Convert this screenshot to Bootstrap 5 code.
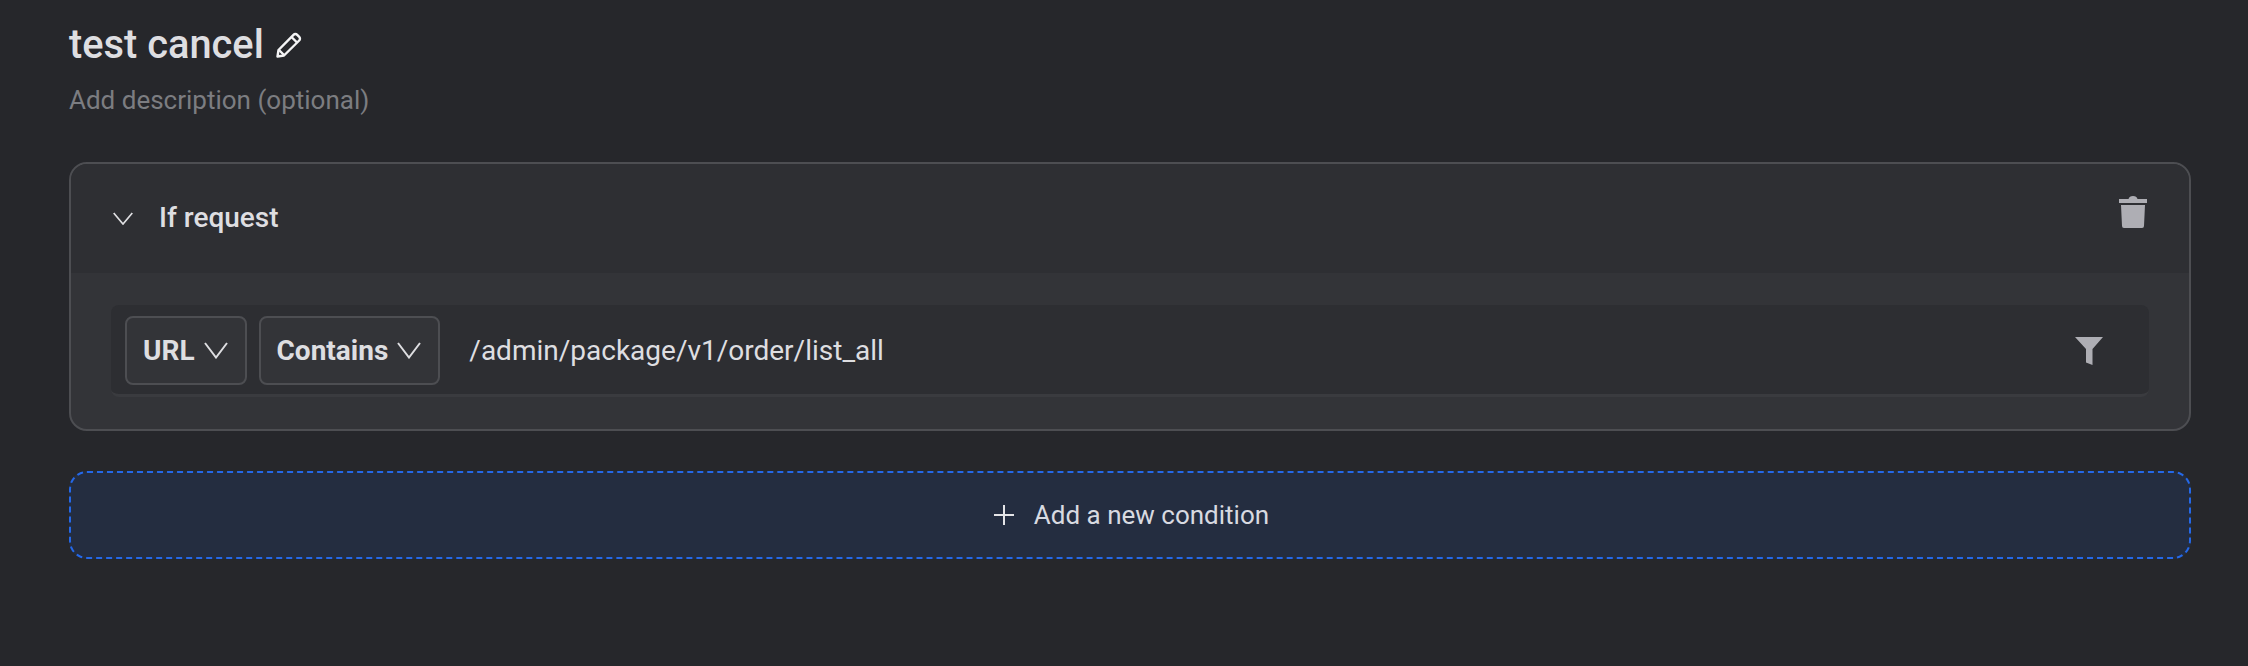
<!DOCTYPE html>
<html lang="en">
<head>
    <meta charset="UTF-8">
    <meta name="viewport" content="width=device-width, initial-scale=1.0">
    <title>test cancel</title>
    <link href="https://cdn.jsdelivr.net/npm/bootstrap@5.3.0/dist/css/bootstrap.min.css" rel="stylesheet">
    <style>
        body {
            background-color: #26272b;
            color: #dedee1;
            font-family: Roboto, "Liberation Sans", sans-serif;
            overflow: hidden;
        }
        .page-wrap { padding: 21px 57px 0 69px; }
        .title-row { gap: 12px; height: 48px; }
        .rule-title { font-size: 39.8px; font-weight: 500; line-height: 48px; margin: 0; color: #dedee1; }
        .rule-desc { font-size: 26px; line-height: 36px; color: #7c7d81; margin-top: 13px; margin-bottom: 44px; }
        .cond-box {
            border: 2px solid #4d4e52;
            border-radius: 18px;
            background-color: #333438;
            overflow: hidden;
            height: 269px;
        }
        .cond-head { height: 109px; background-color: #2e2f33; padding: 0 42px; }
        .cond-head-title { font-size: 28px; font-weight: 500; margin-left: 26px; line-height: 36px; padding-bottom: 2px; }
        .trash-btn { margin-bottom: 14px; }
        .cond-body { padding: 32px 40px 0; }
        .filter-row {
            height: 92px;
            background-color: #2d2e32;
            border-radius: 8px;
            border-bottom: 3px solid #3a3b3f;
            padding: 11px 46px 0 14px;
        }
        .pick-btn {
            height: 69px;
            border: 2px solid #4d4e52;
            border-radius: 8px;
            background-color: #333438;
            color: #dedee1;
            font-size: 28px;
            font-weight: 700;
            padding: 0 17px 0 16px;
            gap: 9px;
        }
        .pick-next { margin-left: 12px; }
        .filter-text { font-size: 28px; margin-left: 29px; line-height: 69px; color: #dedee1; }
        .add-btn {
            width: 100%;
            height: 88px;
            margin-top: 40px;
            padding: 0 6px 0 9px;
            border: 2px dashed #2468e8;
            border-radius: 18px;
            background-color: #242d40;
            color: #d8dae0;
            font-size: 26px;
            gap: 20px;
        }
    </style>
</head>
<body>
    <main class="page-wrap">
        <!-- Название -->
        <div class="title-row d-flex align-items-center">
            <h1 class="rule-title">test cancel</h1>
            <svg width="26" height="26" viewBox="0 0 26 26" fill="none" stroke="#f4f4f5" stroke-width="2.4" stroke-linejoin="round">
                <path d="M1.500 24.500l1-6.500L17.500 2.800a2.600 2.600 0 0 1 3.700 0l2 2a2.600 2.600 0 0 1 0 3.700L8 23.500z"/>
                <path d="M15.500 5l5.500 5.500M3 18l5 5"/>
            </svg>
        </div>
        <div class="rule-desc">Add description (optional)</div>

        <!-- Условие -->
        <section class="cond-box">
            <div class="cond-head d-flex align-items-center">
                <svg width="20" height="13" viewBox="0 0 20 13" fill="none" stroke="#dedee1" stroke-width="1.700">
                    <path d="M.7 1L10 12 19.300 1"/>
                </svg>
                <span class="cond-head-title flex-grow-1">If request</span>
                <svg class="trash-btn" width="28" height="32" viewBox="0 0 28 32" fill="#aeaeb4">
                    <path d="M0 3h9.500C10 1 11.500 0 14 0s4 1 4.500 3H28v4H0zM2 9h24l-1 21a2 2 0 0 1-2 2H5a2 2 0 0 1-2-2z"/>
                </svg>
            </div>
            <div class="cond-body">
                <div class="filter-row d-flex">
                    <button type="button" class="pick-btn d-flex align-items-center">
                        URL
                        <svg width="24" height="17" viewBox="0 0 24 17" fill="none" stroke="#dedee1" stroke-width="2"><path d="M1 1L12 15.500 23 1"/></svg>
                    </button>
                    <button type="button" class="pick-btn pick-next d-flex align-items-center">
                        Contains
                        <svg width="24" height="17" viewBox="0 0 24 17" fill="none" stroke="#dedee1" stroke-width="2"><path d="M1 1L12 15.500 23 1"/></svg>
                    </button>
                    <span class="filter-text flex-grow-1">/admin/package/v1/order/list_all</span>
                    <svg class="align-self-center mb-2" width="28" height="28" viewBox="0 0 28 28" fill="#aeaeb4">
                        <path d="M0 0h28L17.500 12v16L11 25.500V12z"/>
                    </svg>
                </div>
            </div>
        </section>

        <button type="button" class="add-btn d-flex align-items-center justify-content-center">
            <svg width="20" height="20" viewBox="0 0 20 20" stroke="#e4e4e7" stroke-width="2"><path d="M10 0v20M0 10h20"/></svg>
            Add a new condition
        </button>
    </main>
    <script src="https://cdn.jsdelivr.net/npm/bootstrap@5.3.0/dist/js/bootstrap.bundle.min.js"></script>
</body>
</html>
